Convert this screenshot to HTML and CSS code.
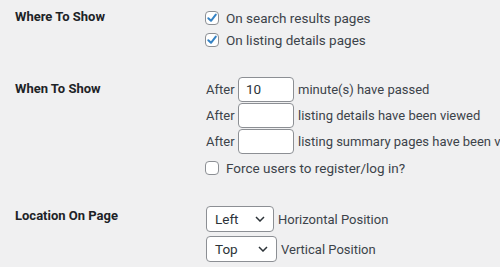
FILE: index.html
```html
<!DOCTYPE html>
<html lang="en">
<head>
    <meta charset="UTF-8">
    <title>Popup Settings</title>
    <link rel="stylesheet" href="styles.css">
</head>
<body>
    <div class="form-table">
        <!-- Where -->
        <div class="row row-where">
            <div class="th">Where To Show</div>
            <div class="td">
                <label class="check-line">
                    <span class="cb checked"><svg viewBox="0 0 14 14" width="14" height="14"><path d="M3.3 7.2 L6 9.8 L10.8 3.6" fill="none" stroke="#3582c4" stroke-width="2" stroke-linecap="round" stroke-linejoin="round"/></svg></span>
                    On search results pages
                </label>
                <label class="check-line">
                    <span class="cb checked"><svg viewBox="0 0 14 14" width="14" height="14"><path d="M3.3 7.2 L6 9.8 L10.8 3.6" fill="none" stroke="#3582c4" stroke-width="2" stroke-linecap="round" stroke-linejoin="round"/></svg></span>
                    On listing details pages
                </label>
            </div>
        </div>

        <!-- When -->
        <div class="row row-when">
            <div class="th">When To Show</div>
            <div class="td">
                <div class="input-line">
                    <span class="after">After</span>
                    <input type="text" class="small-text" value="10">
                    <span class="desc">minute(s) have passed</span>
                </div>
                <div class="input-line">
                    <span class="after">After</span>
                    <input type="text" class="small-text" value="">
                    <span class="desc">listing details have been viewed</span>
                </div>
                <div class="input-line">
                    <span class="after">After</span>
                    <input type="text" class="small-text" value="">
                    <span class="desc">listing summary pages have been viewed</span>
                </div>
                <label class="check-line force">
                    <span class="cb"></span>
                    Force users to register/log in?
                </label>
            </div>
        </div>

        <!-- Location -->
        <div class="row row-location">
            <div class="th">Location On Page</div>
            <div class="td">
                <div class="select-line">
                    <div class="select sel-h">Left
                        <svg class="chev" viewBox="0 0 10 6" width="10" height="6"><path d="M1 1 L5 5 L9 1" fill="none" stroke="#2c3338" stroke-width="1.5"/></svg>
                    </div>
                    <span class="desc">Horizontal Position</span>
                </div>
                <div class="select-line">
                    <div class="select sel-v">Top
                        <svg class="chev" viewBox="0 0 10 6" width="10" height="6"><path d="M1 1 L5 5 L9 1" fill="none" stroke="#2c3338" stroke-width="1.5"/></svg>
                    </div>
                    <span class="desc">Vertical Position</span>
                </div>
            </div>
        </div>
    </div>
</body>
</html>
```

FILE: styles.css
```css
body {
    margin: 0;
    background: #f0f0f1;
    font-family: Roboto, "Noto Sans", sans-serif;
    font-size: 13.5px;
    color: #3c434a;
    overflow: hidden;
}
.form-table {
    width: 500px;
    overflow: hidden;
}
.row {
    display: grid;
    grid-template-columns: 190px 1fr;
    padding-left: 15px;
}
.row-where { padding-top: 7px; }
.row-when { margin-top: 25px; }
.row-location { margin-top: 27px; }
.th {
    font-weight: 700;
    font-size: 13px;
    color: #1d2327;
    line-height: 20px;
}
.row-when .th { padding-top: 3px; }
.td {
    white-space: nowrap;
    overflow: hidden;
}
.check-line {
    display: flex;
    align-items: center;
    gap: 7px;
    height: 22px;
}
.cb {
    display: block;
    flex-shrink: 0;
    box-sizing: border-box;
    width: 14px;
    height: 14px;
    border: 1px solid #8c8f94;
    border-radius: 4px;
    background: #fff;
}
.cb svg {
    display: block;
    margin: -1px;
}
.input-line {
    display: flex;
    align-items: center;
    height: 26px;
}
.after {
    flex-shrink: 0;
    width: 32px;
    font-size: 13px;
    margin-left: 1px;
}
.small-text {
    flex-shrink: 0;
    box-sizing: border-box;
    width: 56px;
    height: 25px;
    margin: 0 4px 0 0;
    padding: 0 7px;
    border: 1px solid #8c8f94;
    border-radius: 4px;
    background: #fff;
    font: inherit;
    color: #2c3338;
}
.desc {
    font-size: 13px;
}
.force {
    margin-top: 3px;
}
.select-line {
    display: flex;
    align-items: center;
    gap: 4px;
    margin-bottom: 4px;
}
.select {
    box-sizing: border-box;
    height: 26px;
    display: flex;
    align-items: center;
    justify-content: space-between;
    padding: 0 8px;
    border: 1px solid #8c8f94;
    border-radius: 4px;
    background: #fff;
    color: #2c3338;
    margin-left: 1px;
}
.sel-h { width: 68px; }
.sel-v { width: 71px; }
.chev {
    display: block;
}
```
